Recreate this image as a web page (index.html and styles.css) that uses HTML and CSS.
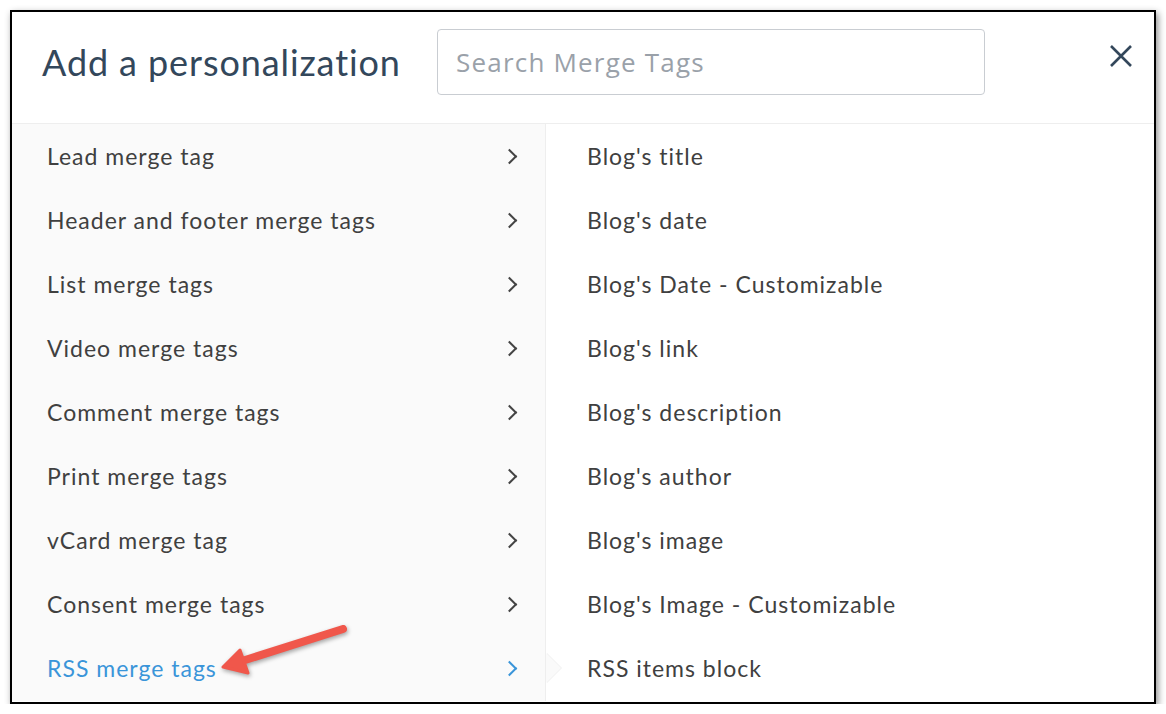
FILE: index.html
```html
<!doctype html>
<html>
<head>
<meta charset="utf-8">
<title>Add a personalization</title>
<link rel="stylesheet" href="styles.css">
</head>
<body>
<div class="frame">
    <div class="head">
        <h1 class="title">Add a personalization</h1>
        <div class="search">Search Merge Tags</div>
        <svg class="close" width="24" height="24" viewBox="0 0 24 24"><path d="M2 2 L22 22 M22 2 L2 22" stroke="#33475b" stroke-width="2.6" fill="none"/></svg>
    </div>
    <div class="body">
        <ul class="menu">
            <li>Lead merge tag<i class="chev"></i></li>
            <li>Header and footer merge tags<i class="chev"></i></li>
            <li>List merge tags<i class="chev"></i></li>
            <li>Video merge tags<i class="chev"></i></li>
            <li>Comment merge tags<i class="chev"></i></li>
            <li>Print merge tags<i class="chev"></i></li>
            <li>vCard merge tag<i class="chev"></i></li>
            <li>Consent merge tags<i class="chev"></i></li>
            <li class="on">RSS merge tags<i class="chev"></i></li>
        </ul>
        <ul class="tags">
            <li>Blog's title</li>
            <li>Blog's date</li>
            <li>Blog's Date - Customizable</li>
            <li>Blog's link</li>
            <li>Blog's description</li>
            <li>Blog's author</li>
            <li>Blog's image</li>
            <li>Blog's Image - Customizable</li>
            <li>RSS items block</li>
        </ul>
    </div>
    <!-- annotation arrow -->
    <svg class="mark" width="140" height="70" viewBox="0 0 140 70">
        <line x1="131" y1="17" x2="30" y2="49" stroke="#f0574b" stroke-width="8" stroke-linecap="round"/>
        <polygon points="11,55 28,38 36,61" fill="#f0574b" stroke="#f0574b" stroke-width="3" stroke-linejoin="round"/>
    </svg>
</div>
</body>
</html>
```

FILE: styles.css
```css
body{
    margin:0;
    background:#fff;
    font-family:Lato, "Open Sans", sans-serif;
}
ul{
    margin:0;
    padding:0;
}
li{
    list-style:none;
}
.frame{
    position:relative;
    margin:10px 0 0 10px;
    width:1142px;
    height:690px;
    border:2px solid #000;
    box-shadow:2px 3px 7px rgba(0,0,0,.45);
    background:#fff;
    overflow:hidden;
}
.head{
    height:112px;
    border-bottom:1px solid #eee;
    display:flex;
    align-items:center;
    padding-left:30px;
    box-sizing:border-box;
}
.title{
    margin:0;
    font-weight:400;
    font-size:36px;
    letter-spacing:.9px;
    color:#33475b;
    width:395px;
    position:relative;
    top:-6px;
}
.search{
    width:548px;
    height:66px;
    border:1px solid #c9cdd2;
    border-radius:4px;
    box-sizing:border-box;
    font-family:"Open Sans", sans-serif;
    font-size:26px;
    letter-spacing:1.2px;
    color:#9aa1a9;
    line-height:64px;
    padding-left:18px;
    position:relative;
    top:-6px;
}
.close{
    margin-left:124px;
    position:relative;
    top:-12px;
}
.body{
    display:flex;
    height:577px;
}
.menu{
    width:533px;
    background:#fafafa;
    border-right:1px solid #eee;
}
.menu li{
    height:64px;
    display:flex;
    align-items:center;
    justify-content:space-between;
    padding:0 30px 0 35px;
    font-size:23px;
    letter-spacing:1px;
    color:#404040;
    position:relative;
}
.chev{
    width:9px;
    height:9px;
    border-top:2px solid #444;
    border-right:2px solid #444;
    transform:rotate(45deg);
}
.menu li.on{
    color:#3a95d9;
}
.menu li.on .chev{
    border-color:#3a95d9;
}
.menu li.on:after{
    content:"";
    position:absolute;
    right:-16px;
    top:17px;
    border-left:15px solid #fafafa;
    border-top:15px solid transparent;
    border-bottom:15px solid transparent;
    filter:drop-shadow(1px 0 0 #f0f0f0);
}
.tags{
    flex:1;
}
.tags li{
    height:64px;
    line-height:64px;
    padding-left:41px;
    font-size:23px;
    letter-spacing:1px;
    color:#404040;
}
.mark{
    position:absolute;
    left:200px;
    top:600px;
    filter:drop-shadow(1px 2px 2px rgba(0,0,0,.35));
}
```
